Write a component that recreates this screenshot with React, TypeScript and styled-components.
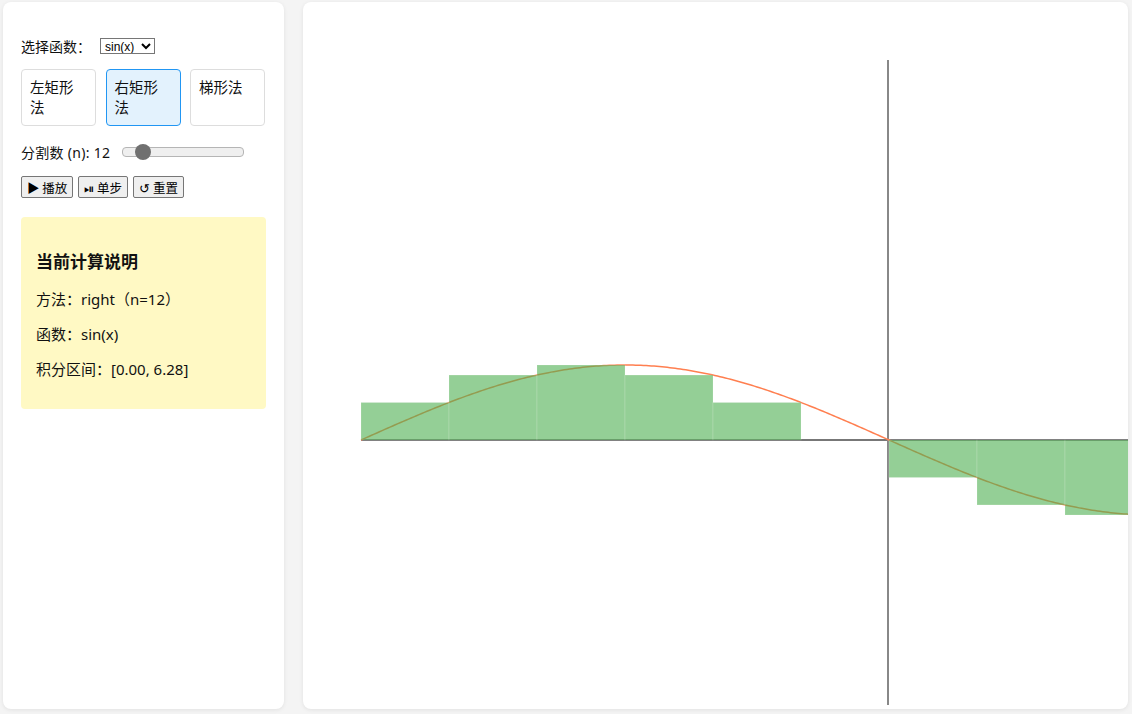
import styled, { createGlobalStyle } from 'styled-components';

const GlobalStyle = createGlobalStyle`
  html, body {
    margin: 0;
    padding: 0;
    background: #f4f4f4;
    font-family: "Noto Sans", "Noto Sans CJK SC", sans-serif;
    color: #111;
  }
`;

const Layout = styled.div`
  display: flex;
  gap: 19px;
  height: 714px;
  box-sizing: border-box;
  padding: 2px 4px 5px 3px;
`;

const Sidebar = styled.div`
  width: 281px;
  flex-shrink: 0;
  box-sizing: border-box;
  padding: 34px 18px 18px;
  background: #fff;
  border-radius: 8px;
  box-shadow: 0 1px 4px rgba(0, 0, 0, 0.08);
`;

const Row = styled.div<{ mb: number }>`
  display: flex;
  align-items: center;
  font-size: 14px;
  margin-bottom: ${(p) => p.mb}px;
`;

const Select = styled.select`
  margin-left: 9px;
  font-family: "Liberation Sans", sans-serif;
  font-size: 12px;
  height: 16px;
  padding: 0;
  border: 1px solid #767676;
  border-radius: 0;
  background: #fff;
`;

const Methods = styled.div`
  display: grid;
  grid-template-columns: repeat(3, 75px);
  column-gap: 9.5px;
  margin-bottom: 16px;
`;

const MethodButton = styled.button<{ active?: boolean }>`
  height: 57px;
  box-sizing: border-box;
  padding: 7px 8px;
  text-align: left;
  display: flex;
  align-items: flex-start;
  font-family: "Noto Sans CJK SC", sans-serif;
  font-size: 14.5px;
  line-height: 20px;
  color: #111;
  border-radius: 4px;
  border: 1px solid ${(p) => (p.active ? '#2196f3' : '#ddd')};
  background: ${(p) => (p.active ? '#e3f2fd' : '#fff')};
`;

const SliderLabel = styled.span`
  letter-spacing: 0.3px;
`;

const Range = styled.input`
  -webkit-appearance: none;
  appearance: none;
  width: 120px;
  height: 8px;
  margin: 0 0 0 12px;
  background: #efefef;
  border: 1px solid #b5b5b5;
  border-radius: 4px;
  &::-webkit-slider-thumb {
    -webkit-appearance: none;
    width: 16px;
    height: 16px;
    border-radius: 50%;
    background: #707070;
  }
`;

const Controls = styled.div`
  display: flex;
  gap: 5px;
  margin-bottom: 19px;
`;

const CtrlButton = styled.button`
  height: 22px;
  padding: 0 5px;
  font-family: "Noto Sans CJK SC", sans-serif;
  font-size: 12.5px;
  color: #000;
  background: #efefef;
  border: 1px solid #767676;
  border-radius: 2px;
`;

const InfoBox = styled.div`
  background: #fff9c4;
  border-radius: 4px;
  padding: 15px;
  height: 192px;
  box-sizing: border-box;
`;

const InfoTitle = styled.h3`
  margin: 16px 0 16px;
  font-size: 17px;
  font-family: "Noto Sans CJK SC", sans-serif;
  font-weight: 700;
`;

const InfoLine = styled.p`
  margin: 0 0 14px;
  font-size: 15px;
  line-height: 21px;
`;

const ChartPanel = styled.div`
  flex: 1;
  background: #fff;
  border-radius: 8px;
  overflow: hidden;
  box-shadow: 0 1px 4px rgba(0, 0, 0, 0.08);
`;

const X0 = 58;
const AXIS_Y = 438;
const UNIT = 1056 / (2 * Math.PI);
const AMP = 75;
const N = 12;

function Chart() {
  const dx = (2 * Math.PI) / N;
  const pts: string[] = [];
  for (let i = 0; i <= 400; i++) {
    const t = (2 * Math.PI * i) / 400;
    pts.push(`${X0 + t * UNIT},${AXIS_Y - AMP * Math.sin(t)}`);
  }
  const rects = Array.from({ length: N }, (_, i) => {
    const y = Math.sin((i + 1) * dx);
    const h = Math.abs(y) * AMP;
    return {
      x: X0 + i * dx * UNIT,
      y: y >= 0 ? AXIS_Y - h : AXIS_Y,
      h,
    };
  });
  return (
    <svg width="100%" height="100%">
      <line x1={X0} y1={AXIS_Y} x2={1200} y2={AXIS_Y} stroke="#777" strokeWidth={2} />
      <line x1={585} y1={58} x2={585} y2={703} stroke="#888" strokeWidth={2} />
      <polyline points={pts.join(' ')} fill="none" stroke="#ff7f50" strokeWidth={1.5} />
      {rects.map((r, i) => (
        <rect
          key={i}
          x={r.x}
          y={r.y}
          width={dx * UNIT}
          height={r.h}
          fill="#4caf50"
          fillOpacity={0.6}
          stroke="#fff"
          strokeOpacity={0.15}
          strokeWidth={1}
        />
      ))}
    </svg>
  );
}

export default function App() {
  return (
    <>
      <GlobalStyle />
      <Layout>
        <Sidebar>
          <Row mb={13}>
            <span>选择函数：</span>
            <Select defaultValue="sin">
              <option value="sin">sin(x)</option>
              <option value="cos">cos(x)</option>
              <option value="x2">x²</option>
            </Select>
          </Row>
          <Methods>
            <MethodButton>左矩形法</MethodButton>
            <MethodButton active>右矩形法</MethodButton>
            <MethodButton>梯形法</MethodButton>
          </Methods>
          <Row mb={14}>
            <SliderLabel>分割数 (n): 12</SliderLabel>
            <Range type="range" min={1} max={100} defaultValue={12} />
          </Row>
          <Controls>
            <CtrlButton>▶ 播放</CtrlButton>
            <CtrlButton>⏯︎ 单步</CtrlButton>
            <CtrlButton>↺ 重置</CtrlButton>
          </Controls>
          <InfoBox>
            <InfoTitle>当前计算说明</InfoTitle>
            <InfoLine>方法：right（n=12）</InfoLine>
            <InfoLine>函数：sin(x)</InfoLine>
            <InfoLine>积分区间：[0.00, 6.28]</InfoLine>
          </InfoBox>
        </Sidebar>
        <ChartPanel>
          <Chart />
        </ChartPanel>
      </Layout>
    </>
  );
}
